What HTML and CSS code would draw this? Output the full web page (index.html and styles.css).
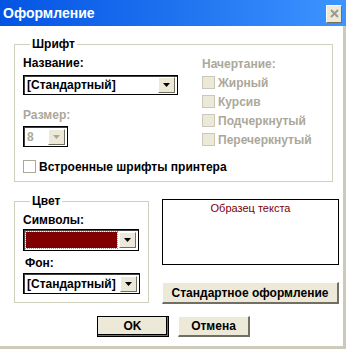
FILE: index.html
```html
<!DOCTYPE html>
<html lang="ru">
<head>
  <meta charset="UTF-8">
  <title>Оформление</title>
  <link rel="stylesheet" href="styles.css">
</head>
<body>

  <div class="window">
    <!-- Заголовок окна -->
    <div class="titlebar">
      <span class="title">Оформление</span>
      <span class="close">
        <svg width="9" height="9" viewBox="0 0 9 9"><path d="M1 1 L8 8 M8 1 L1 8" stroke="#9c9a8c" stroke-width="2"/></svg>
      </span>
    </div>

    <div class="body">
      <fieldset class="group font-group">
        <legend>Шрифт</legend>
        <div class="font-cols">
          <div class="col-left">
            <div class="label name-label">Название:</div>
            <div class="select name-select">
              <span class="value">[Стандартный]</span>
              <span class="drop"><svg width="7" height="4" viewBox="0 0 7 4"><path d="M0 0 H7 L3.5 4 Z" fill="#000"/></svg></span>
            </div>
            <div class="label disabled size-label">Размер:</div>
            <div class="select size-select disabled">
              <span class="value">8</span>
              <span class="drop"><svg width="7" height="4" viewBox="0 0 7 4"><path d="M0 0 H7 L3.5 4 Z" fill="#aca899"/></svg></span>
            </div>
          </div>
          <div class="col-right">
            <div class="label disabled style-label">Начертание:</div>
            <div class="check disabled"><span class="box"></span>Жирный</div>
            <div class="check disabled"><span class="box"></span>Курсив</div>
            <div class="check disabled"><span class="box"></span>Подчеркнутый</div>
            <div class="check disabled"><span class="box"></span>Перечеркнутый</div>
          </div>
        </div>
        <div class="check printer"><span class="box"></span>Встроенные шрифты принтера</div>
      </fieldset>

      <div class="lower">
        <fieldset class="group color-group">
          <legend>Цвет</legend>
          <div class="label chars-label">Символы:</div>
          <div class="select color-select">
            <span class="swatch"></span>
            <span class="drop"><svg width="7" height="4" viewBox="0 0 7 4"><path d="M0 0 H7 L3.5 4 Z" fill="#000"/></svg></span>
          </div>
          <div class="label bg-label">Фон:</div>
          <div class="select bg-select">
            <span class="value">[Стандартный]</span>
            <span class="drop"><svg width="7" height="4" viewBox="0 0 7 4"><path d="M0 0 H7 L3.5 4 Z" fill="#000"/></svg></span>
          </div>
        </fieldset>

        <div class="preview-col">
          <div class="preview">Образец текста</div>
          <button class="btn wide">Стандартное оформление</button>
        </div>
      </div>

      <div class="actions">
        <button class="btn default">OK</button>
        <button class="btn">Отмена</button>
      </div>
    </div>
  </div>

</body>
</html>
```

FILE: styles.css
```css
* {
  margin: 0;
  padding: 0;
  box-sizing: border-box;
}
body {
  font-family: 'Liberation Sans', Arial, sans-serif;
  font-size: 12px;
  font-weight: bold;
  color: #000;
  background: #fff;
}
.window {
  width: 346px;
  height: 349px;
  background: #fff;
}
.titlebar {
  height: 26px;
  display: flex;
  align-items: center;
  justify-content: space-between;
  padding: 0 4px 0 3px;
  background: linear-gradient(to right, #0454e4 0%, #1e72ef 50%, #3d95ff 100%);
}
.title {
  color: #fff;
  font-size: 14px;
  line-height: 16px;
}
.close {
  width: 16px;
  height: 18px;
  display: flex;
  align-items: center;
  justify-content: center;
  background: #ece9d8;
  border-top: 1px solid #fff;
  border-left: 1px solid #fff;
  border-right: 1px solid #716f64;
  border-bottom: 1px solid #716f64;
  margin-top: 1px;
}
.body {
  height: 323px;
  border-right: 3px solid #cdcab9;
  border-bottom: 3px solid #cdcab9;
  padding: 12px 0 0 14px;
}
.label {
  line-height: 13px;
}
.disabled {
  color: #aca899;
}

/* Рамки групп */
.group {
  border: 1px solid #d0d0bf;
  padding: 0 8px;
}
.group legend {
  padding: 0 2px;
  margin-left: 7px;
  line-height: 13px;
}
.font-group {
  width: 319px;
  height: 144px;
}
.font-cols {
  display: flex;
}
.col-left {
  width: 179px;
}
.name-label {
  margin-top: 6px;
}

/* Выпадающие списки */
.select {
  display: flex;
  align-items: center;
  justify-content: space-between;
  background: #fff;
  border: 1px solid #000;
  box-shadow: inset 1px 1px 0 #404040;
  padding: 2px;
}
.select .value {
  padding-left: 1px;
}
.drop {
  width: 17px;
  height: 16px;
  display: flex;
  align-items: center;
  justify-content: center;
  background: #ece9d8;
  border-top: 1px solid #fff;
  border-left: 1px solid #fff;
  border-right: 1px solid #716f64;
  border-bottom: 1px solid #716f64;
}
.name-select {
  width: 155px;
  height: 20px;
  margin-top: 5px;
}
.size-label {
  margin-top: 14px;
}
.size-select {
  width: 45px;
  height: 21px;
  margin-top: 4px;
}

/* Флажки */
.check {
  display: flex;
  align-items: center;
  height: 19px;
}
.box {
  width: 13px;
  height: 13px;
  margin-right: 3px;
  border: 1px solid #1c5180;
  background: #fff;
}
.check.disabled .box {
  border-color: #cac8bb;
  background: #ece9d8;
}
.style-label {
  margin-top: 7px;
  margin-bottom: 2px;
}
.printer {
  margin-top: 8px;
}
.printer .box {
  border-color: #aca899;
}

.lower {
  display: flex;
  margin-top: 13px;
}
.color-group {
  width: 130px;
  height: 108px;
}
.chars-label {
  margin-top: 6px;
}
.color-select {
  width: 116px;
  height: 22px;
  margin-top: 2px;
}
.swatch {
  flex: 1;
  height: 16px;
  margin-right: 2px;
  background: #800000;
  outline: 1px dotted #8a8cff;
}
.bg-label {
  margin-top: 6px;
  padding-left: 2px;
}
.bg-select {
  width: 117px;
  height: 21px;
  margin-top: 3px;
}

.preview-col {
  margin-left: 13px;
  margin-top: 4px;
  width: 177px;
}
.preview {
  height: 66px;
  border: 1px solid #000;
  text-align: center;
  font-weight: normal;
  color: #800000;
  font-size: 11px;
  padding-top: 2px;
}

/* Кнопки */
.btn {
  font-family: inherit;
  font-size: 12px;
  font-weight: bold;
  color: #000;
  background: #ece9d8;
  border-top: 1px solid #fff;
  border-left: 1px solid #fff;
  border-right: 2px solid #716f64;
  border-bottom: 2px solid #716f64;
  height: 22px;
}
.wide {
  width: 177px;
  margin-top: 17px;
}
.actions {
  display: flex;
  gap: 9px;
  margin-top: 12px;
  padding-left: 83px;
}
.actions .btn {
  width: 72px;
  height: 21px;
}
.btn.default {
  outline: 1px solid #000;
  outline-offset: -1px;
  box-shadow: inset -1px -1px 0 #000;
}
```
